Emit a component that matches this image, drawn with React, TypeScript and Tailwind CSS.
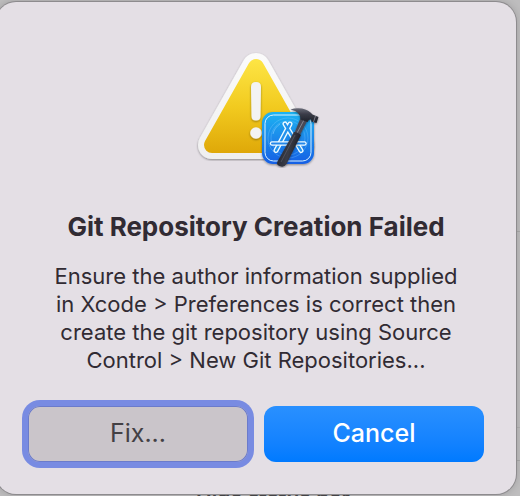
import React from 'react';

const WarningIcon: React.FC = () => (
  <svg className="mx-auto block" width="128" height="128" viewBox="0 0 128 128" role="img" aria-label="Warning">
    <defs>
      <linearGradient id="sign" gradientUnits="userSpaceOnUse" x1="64" y1="19" x2="64" y2="113">
        <stop offset="0" stopColor="#fde545" />
        <stop offset="0.5" stopColor="#f2cb20" />
        <stop offset="1" stopColor="#dfa808" />
      </linearGradient>
      <linearGradient id="rim" gradientUnits="userSpaceOnUse" x1="64" y1="13" x2="64" y2="119">
        <stop offset="0" stopColor="#fbfbfb" />
        <stop offset="1" stopColor="#efefef" />
      </linearGradient>
      <linearGradient id="tile" x1="0" y1="0" x2="0" y2="1">
        <stop offset="0" stopColor="#1cb4f2" />
        <stop offset="1" stopColor="#185fe4" />
      </linearGradient>
      <linearGradient id="grip" x1="0" y1="0.3" x2="1" y2="0.6">
        <stop offset="0" stopColor="#20222c" />
        <stop offset="0.5" stopColor="#3a3c47" />
        <stop offset="1" stopColor="#14151c" />
      </linearGradient>
      <linearGradient id="head" x1="0" y1="0" x2="0" y2="1">
        <stop offset="0" stopColor="#6b6d79" />
        <stop offset="0.4" stopColor="#3a3c48" />
        <stop offset="1" stopColor="#1c1d26" />
      </linearGradient>
      <filter id="drop" x="-20%" y="-20%" width="140%" height="140%">
        <feDropShadow dx="0" dy="1" stdDeviation="1.2" floodColor="#000" floodOpacity="0.4" />
      </filter>
    </defs>

    {/* sign */}
    <path
      d="M64 27 L108 105 H20 Z"
      fill="url(#rim)"
      stroke="url(#rim)"
      strokeWidth="28"
      strokeLinejoin="round"
      filter="url(#drop)"
    />
    <path d="M64 27 L108 105 H20 Z" fill="url(#sign)" stroke="url(#sign)" strokeWidth="16" strokeLinejoin="round" />
    <g filter="url(#drop)" fill="#f3f3f3">
      <path d="M59 47 Q59 42 64 42 Q69 42 69 47 L68.500 76 Q68.500 80.500 64 80.500 Q59.500 80.500 59.500 76 Z" />
      <circle cx="64" cy="93" r="5.800" />
    </g>

    {/* app badge */}
    <rect x="70" y="72" width="52" height="52" rx="11" fill="url(#tile)" filter="url(#drop)" />
    <rect x="73" y="75" width="46" height="46" rx="8.500" fill="none" stroke="#d9f2ff" strokeWidth="1" />
    <g fill="none" stroke="#8fd3ff" strokeOpacity="0.4" strokeWidth="0.7">
      <circle cx="96" cy="98" r="20" />
      <circle cx="96" cy="98" r="17" />
      <path d="M81 94 A16 16 0 0 1 88 84" strokeOpacity="0.8" />
    </g>
    <g strokeLinecap="round" fill="none">
      <path d="M84 110.500 L98 84 M93 84 L109 110.500" stroke="#f0fbff" strokeWidth="5" />
      <path d="M84 110.500 L98 84 M93 84 L109 110.500" stroke="#2493ed" strokeWidth="2.400" />
      <path d="M80 103.500 H112.500" stroke="#f0fbff" strokeWidth="4.400" />
      <path d="M80 103.500 H112.500" stroke="#2286ea" strokeWidth="2" />
    </g>

    {/* hammer */}
    <g filter="url(#drop)">
      <path d="M109 77 L116 79.500 L107.500 96 L102 94 Z" fill="#484a56" />
      <path d="M112 80 L104.500 94" stroke="#858894" strokeWidth="1" />
      <path d="M102 92 Q105 91.500 109 95 L94.500 124 Q92 128 87.500 126 Q84 124.500 85.500 121.500 Z" fill="url(#grip)" />
      <path d="M103 95 L89 122" stroke="#555864" strokeWidth="0.800" />
      <path
        d="M98.500 69.500 Q104 67.500 110 68.500 Q117 70 120.500 74.500 L126.500 77 L124.500 83 L119.500 81.500 L119 79.500 Q116.500 79 115.500 82 L108.500 79.500 Q109 72 98.500 69.500 Z"
        fill="url(#head)"
      />
      <path d="M123.500 76 L121.500 82" stroke="#8a8d99" strokeWidth="0.800" />
    </g>
  </svg>
);

// Only the edges of the window underneath show around the alert
const Backdrop: React.FC = () => (
  <div className="absolute inset-0 flex flex-col overflow-hidden" aria-hidden="true">
    <div className="h-[232px] shrink-0 border-b border-[#a9a9a9]" />
    <div className="h-[196px] shrink-0 border-b border-[#b0b0b0]" />
    <div className="h-[33px] shrink-0 border-b border-[#a9a9a9]" />
    <p className="px-[196px] pt-6 text-[21px] leading-7 font-semibold whitespace-nowrap text-[#4b4a4c]">
      Hide status bar
    </p>
  </div>
);

const App: React.FC = () => {
  return (
    <div className="relative h-screen overflow-hidden bg-[#bebdbe] pt-[2px] font-['Inter',sans-serif]">
      <Backdrop />
      <div
        role="alertdialog"
        aria-labelledby="title"
        aria-describedby="message"
        className="relative mr-1 -ml-1 rounded-[20px] bg-[#e4dfe5] px-8 pt-[38px] pb-8 text-center text-[#312b33] shadow-[0_0_0_1px_#8d8b8e,0_0_8px_rgba(0,0,0,0.2)]"
      >
        <WarningIcon />
        <h1 id="title" className="mt-10 text-[26px] leading-[38px] font-bold">
          Git Repository Creation Failed
        </h1>
        <p id="message" className="mx-auto mt-4 max-w-[424px] text-[22px] leading-7">
          Ensure the author information supplied in Xcode &gt; Preferences is correct then create the git repository
          using Source Control &gt; New Git Repositories...
        </p>
        <div className="mt-8 grid grid-cols-2 gap-4">
          <button className="h-14 rounded-xl bg-[#cac5ca] text-[25px] text-[#434044] shadow-[0_0_0_6px_#788be2,inset_0_0_0_1px_#6b7bcb]">
            Fix...
          </button>
          <button className="h-14 rounded-xl bg-linear-to-b from-[#2990ff] to-[#007aff] text-[25px] font-medium text-white">
            Cancel
          </button>
        </div>
      </div>
    </div>
  );
};

export default App;
